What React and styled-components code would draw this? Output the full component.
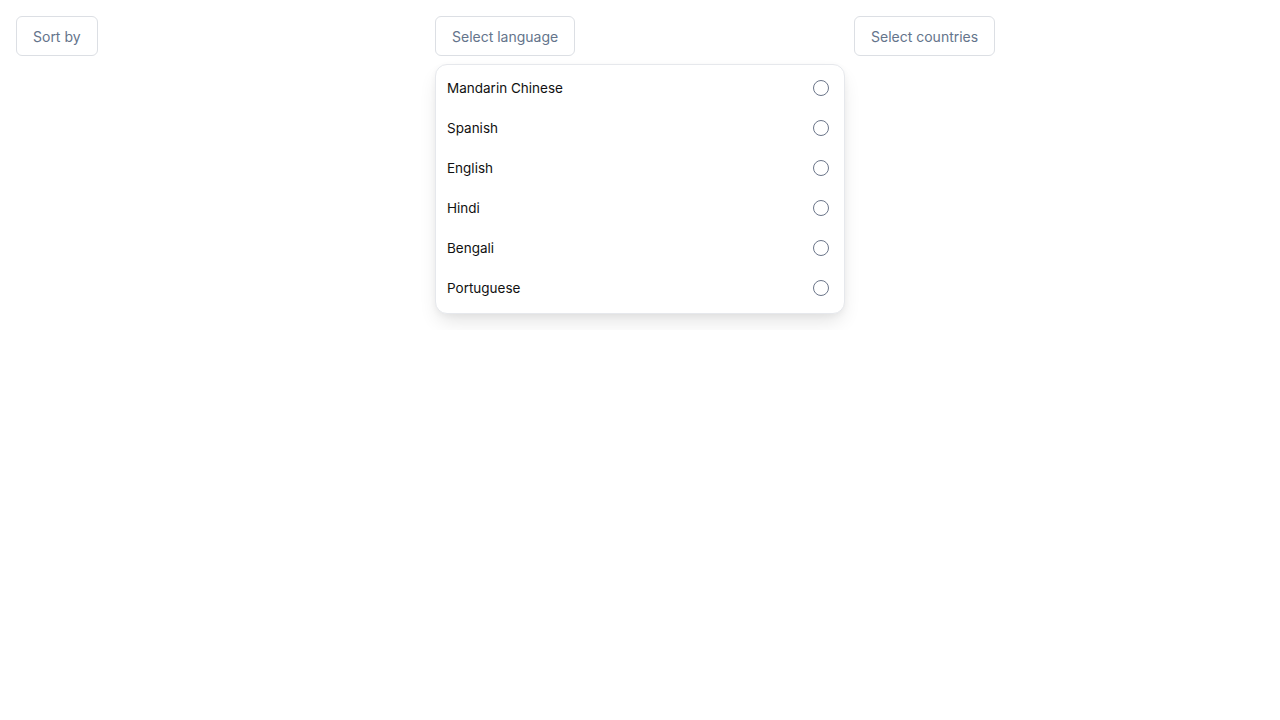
import React from "react";
import styled, { createGlobalStyle } from "styled-components";

const GlobalStyle = createGlobalStyle`
  body {
    margin: 0;
    background: #ffffff;
    font-family: Inter, "Noto Sans", sans-serif;
  }
`;

const Page = styled.div`
  display: grid;
  grid-template-columns: 410px 410px 410px;
  column-gap: 9px;
  padding: 16px;
  align-items: start;
`;

const Column = styled.div`
  display: flex;
  flex-direction: column;
  align-items: flex-start;
  gap: 8px;
`;

const Trigger = styled.button`
  height: 40px;
  padding: 0 16px;
  border: 1px solid #dcdfe4;
  border-radius: 6px;
  background: #ffffff;
  color: #64748b;
  font-family: Inter, sans-serif;
  font-size: 14px;
  font-weight: 400;
  cursor: pointer;
`;

const Menu = styled.div`
  align-self: stretch;
  display: flex;
  flex-direction: column;
  padding: 3px 0 5px;
  border: 1px solid #e6e8ec;
  border-radius: 12px;
  background: #ffffff;
  box-shadow: 0 10px 20px -4px rgba(0, 0, 0, 0.12), 0 2px 6px rgba(0, 0, 0, 0.04);
`;

const Option = styled.div`
  height: 40px;
  display: flex;
  align-items: center;
  justify-content: space-between;
  padding: 0 15px 0 11px;
  font-size: 13.5px;
  color: #111111;
`;

const Radio = styled.span`
  width: 16px;
  height: 16px;
  box-sizing: border-box;
  border-radius: 50%;
  border: 1px solid #6b7589;
`;

const languages = ["Mandarin Chinese", "Spanish", "English", "Hindi", "Bengali", "Portuguese"];

export default function App() {
  return (
    <>
      <GlobalStyle />
      <Page>
        <Column>
          <Trigger>Sort by</Trigger>
        </Column>
        <Column>
          <Trigger>Select language</Trigger>
          <Menu>
            {languages.map((l) => (
              <Option key={l}>
                {l}
                <Radio />
              </Option>
            ))}
          </Menu>
        </Column>
        <Column>
          <Trigger>Select countries</Trigger>
        </Column>
      </Page>
    </>
  );
}
